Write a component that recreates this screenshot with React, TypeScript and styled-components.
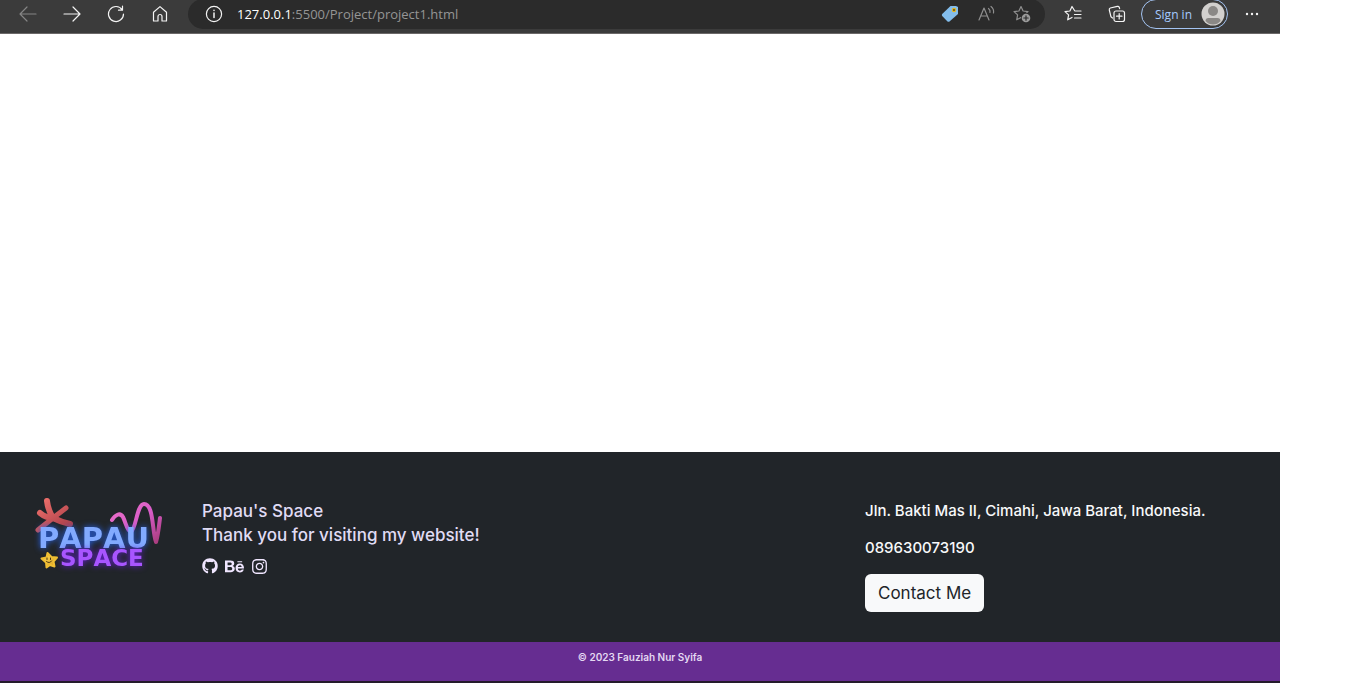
import React from "react";
import styled, { createGlobalStyle } from "styled-components";
import { FaGithub, FaBehance, FaInstagram } from "react-icons/fa";

const GlobalStyle = createGlobalStyle`
  * { box-sizing: border-box; }
  html, body, #root { height: 100%; }
  body { margin: 0; background: #fff; font-family: Inter, "Liberation Sans", sans-serif; }
  p { margin: 0; }
`;

const Page = styled.div`
  display: flex;
  flex-direction: column;
  min-height: 100%;
  margin-right: 65px;
`;

const Toolbar = styled.header`
  display: flex;
  align-items: center;
  height: 34px;
  padding: 0 16px 5px;
  overflow: hidden;
  background: #3b3b3b;
  border-bottom: 1px solid #6b6868;
  font-family: "Open Sans", "Noto Sans", sans-serif;
`;

const NavButtons = styled.nav`
  display: flex;
  gap: 20px;
  margin-right: 16px;
`;

const IconButton = styled.button<{ $tone?: string }>`
  display: flex;
  align-items: center;
  justify-content: center;
  width: 24px;
  height: 24px;
  flex: none;
  padding: 0;
  border: 0;
  background: none;
  color: ${(p) => p.$tone || "#f4f4f4"};
`;

const AddressBar = styled.div`
  display: flex;
  align-items: center;
  flex: 1;
  height: 30px;
  padding: 0 11px 0 14px;
  border-radius: 15px;
  background: #2b2b2b;
`;

const Address = styled.a`
  flex: 1;
  margin-left: 11px;
  color: #959595;
  font-size: 13px;
  line-height: 20px;
  text-decoration: none;
`;

const Host = styled.span`
  color: #fff;
`;

const PillIcons = styled.div`
  display: flex;
  gap: 12px;
`;

const Actions = styled.div`
  display: flex;
  align-items: center;
  gap: 20px;
  margin: 0 12px 0 16px;
`;

const SignIn = styled.button`
  display: flex;
  align-items: center;
  justify-content: space-between;
  flex: none;
  width: 87px;
  height: 30px;
  margin-right: 12px;
  padding: 0 2px 0 13px;
  border: 1px solid #a4c4f2;
  border-radius: 15px;
  background: none;
  color: #a6cbff;
  font-family: inherit;
  font-size: 12px;
`;

const Content = styled.main`
  flex: 1;
`;

const Footer = styled.footer`
  background: #212529;
`;

const FooterBody = styled.div`
  display: flex;
  align-items: flex-start;
  min-height: 190px;
  padding: 40px 32px 30px 28px;
`;

const LogoLink = styled.a`
  flex: none;
  width: 144px;
  height: 88px;
  margin-right: 30px;
`;

const LogoWord = styled.text<{ $glow: string }>`
  font-family: "DejaVu Sans", sans-serif;
  font-weight: 700;
  font-kerning: none;
  filter: drop-shadow(0 0 3px ${(p) => p.$glow});
`;

const About = styled.section`
  flex: 1;
  padding-top: 7px;
  color: #e0dcf5;
  font-size: 17px;
  font-weight: 500;
  line-height: 24px;
`;

const Socials = styled.div`
  display: flex;
  align-items: center;
  gap: 7px;
  height: 24px;
  margin-top: 7px;
`;

const SocialLink = styled.a`
  display: flex;
  color: #f0e6ff;
`;

const Contact = styled.address`
  display: flex;
  flex-direction: column;
  align-items: flex-start;
  gap: 16px;
  width: 383px;
  padding-top: 8px;
  color: #f8f9fa;
  font-size: 15px;
  font-style: normal;
  font-weight: 500;
  line-height: 21px;
`;

const ContactButton = styled.button`
  height: 38px;
  padding: 0 13px;
  border: 0;
  border-radius: 6px;
  background: #f8f9fa;
  color: #212529;
  font-family: inherit;
  font-size: 17px;
  line-height: 24px;
`;

const Copyright = styled.p`
  height: 41px;
  padding-top: 8px;
  border-bottom: 2px solid #241b2b;
  background: #662d91;
  color: #e4d8f2;
  font-size: 10px;
  font-weight: 600;
  line-height: 15px;
  text-align: center;
`;

const LineIcon = ({ children }: { children: React.ReactNode }) => (
  <svg width="18" height="18" viewBox="0 0 18 18" fill="none" stroke="currentColor" strokeWidth="1.2" strokeLinecap="round" strokeLinejoin="round" aria-hidden="true">
    {children}
  </svg>
);

const star = "M8 1.5l2.1 4.5 4.9.6-3.6 3.3.9 4.9L8 12.4l-4.3 2.4.9-4.9L1 6.6 5.9 6z";

const Logo = () => (
  <svg width="144" height="88" viewBox="0 0 144 88" role="img" aria-label="Papau Space">
    <defs>
      <linearGradient id="coral" gradientUnits="userSpaceOnUse" x1="12" y1="8" x2="36" y2="40">
        <stop offset="0" stopColor="#ee706b" />
        <stop offset="1" stopColor="#a83d48" />
      </linearGradient>
      <linearGradient id="pink" x1="0" y1="0" x2="1" y2="1">
        <stop offset="0" stopColor="#ee72c8" />
        <stop offset="0.5" stopColor="#d85cc8" />
        <stop offset="1" stopColor="#a83c7c" />
      </linearGradient>
      <linearGradient id="gold" x1="0" y1="0" x2="1" y2="1">
        <stop offset="0" stopColor="#ffe264" />
        <stop offset="1" stopColor="#d89a18" />
      </linearGradient>
    </defs>
    <g fill="none" stroke="url(#coral)" strokeLinecap="round">
      <path d="M19 9q1 9 6 17" strokeWidth="6" />
      <path d="M38 16L25 26 10 38" strokeWidth="5" />
      <path d="M12 21q6 5 13 5 8 4 17 6" strokeWidth="6" />
    </g>
    <path d="M84 28c3-5 8-8 11-3 3 6 4 14 8 15 5-3 6-28 13-28 10 0 8 28 12 38 2-6 3-16 4-24" fill="none" stroke="url(#pink)" strokeWidth="4" strokeLinecap="round" strokeLinejoin="round" />
    <LogoWord $glow="#2864ee" x="10" y="56" fontSize="29" fill="#82aaff">PAPAU</LogoWord>
    <LogoWord $glow="#6a1ddd" x="32" y="74" fontSize="23" fill="#a855ff">SPACE</LogoWord>
    <path d="M19.500 61l4 4 5.500.5-3.500 4 1 5-4.500-1.500-3.500 2.500-.5-5-4.500-4 5-1z" fill="url(#gold)" stroke="#f0be32" strokeWidth="2" strokeLinejoin="round" />
    <path d="M19 66v1.500M22.500 66v1.500M18.500 69.500q3 2.500 5-.5" fill="none" stroke="#493510" strokeWidth="1" strokeLinecap="round" />
  </svg>
);

export default function App() {
  return (
    <>
      <GlobalStyle />
      <Page>
        <Toolbar>
          <NavButtons aria-label="Browser">
            <IconButton aria-label="Back" $tone="#858585">
              <LineIcon><path d="M17 9H1M8 2L1 9l7 7" /></LineIcon>
            </IconButton>
            <IconButton aria-label="Forward">
              <LineIcon><path d="M1 9h16M10 2l7 7-7 7" /></LineIcon>
            </IconButton>
            <IconButton aria-label="Refresh">
              <LineIcon><path d="M15.2 4.8A7.5 7.5 0 1 0 16.5 9M15.5 1.2v4h-4" /></LineIcon>
            </IconButton>
            <IconButton aria-label="Home">
              <LineIcon><path d="M2.5 7.2L9 1.6l6.5 5.6V16H11v-4.5a2 2 0 0 0-4 0V16H2.5z" /></LineIcon>
            </IconButton>
          </NavButtons>
          <AddressBar>
            <IconButton aria-label="Site information">
              <LineIcon>
                <circle cx="9" cy="9" r="7.6" />
                <path d="M9 8v4.5M9 5.3v.3" strokeWidth="1.5" />
              </LineIcon>
            </IconButton>
            <Address href="#"><Host>127.0.0.1</Host>:5500/Project/project1.html</Address>
            <PillIcons>
              <IconButton aria-label="Shopping">
                <svg width="18" height="18" viewBox="0 0 18 18" aria-hidden="true">
                  <path d="M9.5 1H15l2 1v7l-8.5 7.5q-1 .7-2 0L1.2 11q-.8-1 0-2z" fill="#83bdec" />
                  <circle cx="13" cy="5" r="2.2" fill="#e5b71e" />
                  <circle cx="13" cy="5" r="1" fill="#4c4630" />
                </svg>
              </IconButton>
              <IconButton aria-label="Read aloud" $tone="#8f8f8f">
                <LineIcon><path d="M2 15L7 3l5 12M3.7 11h6.600M11.5 3.5q2 1.5 1.5 4M14 1.5q3.200 2.5 2.5 6.5" /></LineIcon>
              </IconButton>
              <IconButton aria-label="Add to favorites" $tone="#8f8f8f">
                <LineIcon>
                  <path d={star} />
                  <circle cx="13" cy="13" r="5" fill="#2b2b2b" stroke="none" />
                  <circle cx="13" cy="13" r="4.300" fill="#9a9a9a" stroke="none" />
                  <path d="M13 10.8v4.4M10.8 13h4.4" stroke="#2b2b2b" />
                </LineIcon>
              </IconButton>
            </PillIcons>
          </AddressBar>
          <Actions>
            <IconButton aria-label="Favorites">
              <LineIcon><path d="M10.5 5.500L8 1.5 5.9 6 1 6.6l3.6 3.3-.9 4.9L8 12.4M11 6h6M10.5 9.5H17M10.5 13H17" /></LineIcon>
            </IconButton>
            <IconButton aria-label="Collections">
              <LineIcon>
                <path d="M4.5 13L3 11.8 1.3 5q-.3-1.5 1-2l7-1.6q1.5-.3 2 1l.3 1.2" />
                <rect x="6" y="6" width="10.5" height="10.5" rx="2" />
                <path d="M11.2 8.5v5.500M8.5 11.2H14" />
              </LineIcon>
            </IconButton>
          </Actions>
          <SignIn>
            Sign in
            <svg width="24" height="24" viewBox="0 0 24 24" aria-hidden="true">
              <circle cx="12" cy="12" r="11.5" fill="#d2d0ce" />
              <circle cx="12" cy="9" r="5" fill="#8a8886" />
              <path d="M4.5 19q0-3 3-3h9q3 0 3 3-3 3.5-7.5 3.500T4.500 19z" fill="#8a8886" />
            </svg>
          </SignIn>
          <IconButton aria-label="More">
            <svg width="18" height="18" viewBox="0 0 18 18" fill="currentColor" aria-hidden="true">
              <circle cx="4" cy="9" r="1.2" />
              <circle cx="9" cy="9" r="1.2" />
              <circle cx="14" cy="9" r="1.2" />
            </svg>
          </IconButton>
        </Toolbar>
        <Content />
        <Footer>
          <FooterBody>
            <LogoLink href="#"><Logo /></LogoLink>
            <About>
              <p>Papau's Space</p>
              <p>Thank you for visiting my website!</p>
              <Socials>
                <SocialLink href="#" aria-label="GitHub"><FaGithub size={16} /></SocialLink>
                <SocialLink href="#" aria-label="Behance"><FaBehance size={19} /></SocialLink>
                <SocialLink href="#" aria-label="Instagram"><FaInstagram size={17} /></SocialLink>
              </Socials>
            </About>
            <Contact>
              <p>Jln. Bakti Mas II, Cimahi, Jawa Barat, Indonesia.</p>
              <p>089630073190</p>
              <ContactButton>Contact Me</ContactButton>
            </Contact>
          </FooterBody>
          <Copyright>© 2023 Fauziah Nur Syifa</Copyright>
        </Footer>
      </Page>
    </>
  );
}
